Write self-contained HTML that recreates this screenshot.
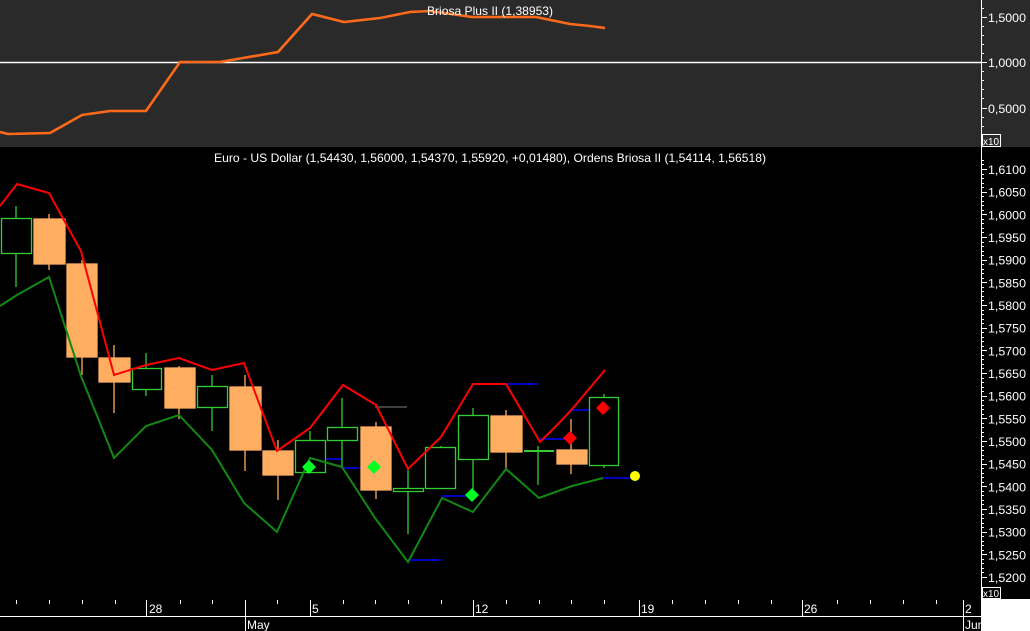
<!DOCTYPE html>
<html><head><meta charset="utf-8"><style>
html,body{margin:0;padding:0;background:#000;width:1030px;height:631px;overflow:hidden}
svg{display:block}
text{font-family:"Liberation Sans",sans-serif;font-size:12px;fill:#fff}
</style></head><body>
<svg width="1030" height="631" viewBox="0 0 1030 631" xmlns="http://www.w3.org/2000/svg">
<rect x="0" y="0" width="1030" height="147" fill="#2a2a2a"/>
<rect x="0" y="147" width="1030" height="484" fill="#000"/>
<!-- top panel -->
<line x1="0" y1="62.5" x2="981" y2="62.5" stroke="#fff" stroke-width="1.5"/>
<polyline fill="none" stroke="#ff6a1a" stroke-width="2.6" points="0,132 8,134 50,133 82,115 110,111 146,111 180,62 220,62 278,52 312,14 344,22 380,18 410,12 430,11 472,17 536,17 570,24 590,26 605,28"/>
<text x="427" y="15" textLength="126" lengthAdjust="spacingAndGlyphs">Briosa Plus II (1,38953)</text>
<line x1="981.5" y1="0" x2="981.5" y2="631" stroke="#fff"/>
<g stroke="#fff">
<line x1="981" y1="17.5" x2="987" y2="17.5"/><line x1="981" y1="62.5" x2="987" y2="62.5"/><line x1="981" y1="108.5" x2="987" y2="108.5"/>
<line x1="981" y1="8.5" x2="984" y2="8.5"/><line x1="981" y1="26.5" x2="984" y2="26.5"/><line x1="981" y1="35.5" x2="984" y2="35.5"/><line x1="981" y1="44.5" x2="984" y2="44.5"/><line x1="981" y1="53.5" x2="984" y2="53.5"/><line x1="981" y1="71.5" x2="984" y2="71.5"/><line x1="981" y1="80.5" x2="984" y2="80.5"/><line x1="981" y1="89.5" x2="984" y2="89.5"/><line x1="981" y1="98.5" x2="984" y2="98.5"/><line x1="981" y1="117.5" x2="984" y2="117.5"/><line x1="981" y1="126.5" x2="984" y2="126.5"/>
</g>
<text x="988" y="22" textLength="38" lengthAdjust="spacingAndGlyphs">1,5000</text>
<text x="988" y="67" textLength="38" lengthAdjust="spacingAndGlyphs">1,0000</text>
<text x="988" y="113" textLength="38" lengthAdjust="spacingAndGlyphs">0,5000</text>
<rect x="982.5" y="134.5" width="18" height="12" fill="none" stroke="#fff"/>
<text x="983" y="145" style="font-size:10px" textLength="16" lengthAdjust="spacingAndGlyphs">x10</text>
<!-- main title -->
<text x="214" y="162" textLength="552" lengthAdjust="spacingAndGlyphs">Euro - US Dollar (1,54430, 1,56000, 1,54370, 1,55920, +0,01480), Ordens Briosa II (1,54114, 1,56518)</text>
<!-- main axis ticks -->
<g stroke="#fff" id="ticks"></g>
<g id="labels"></g>
<!-- blue lines -->
<g stroke="#0000ff" stroke-width="1.5">
<line x1="310" y1="459" x2="342" y2="459"/><line x1="342" y1="468" x2="373" y2="468"/>
<line x1="375" y1="407" x2="407" y2="407" stroke="#555"/>
<line x1="408" y1="560" x2="441" y2="560"/><line x1="442" y1="496" x2="467" y2="496"/>
<line x1="473" y1="384" x2="538" y2="384"/><line x1="540" y1="439" x2="568" y2="439"/>
<line x1="572" y1="410" x2="600" y2="410"/><line x1="603" y1="478" x2="632" y2="478"/>
</g>
<!-- candles -->
<g stroke="#33cc33" stroke-width="1.3" fill="none">
<line x1="16" y1="206" x2="16" y2="287"/><rect x="1.5" y="218.5" width="30" height="35" fill="#000"/>
<line x1="146" y1="353" x2="146" y2="396"/><rect x="132.5" y="368.5" width="29" height="21" fill="#000"/>
<line x1="212" y1="375" x2="212" y2="431"/><rect x="197.5" y="386.5" width="30" height="21" fill="#000"/>
<line x1="310" y1="431" x2="310" y2="472"/><rect x="295.5" y="440.5" width="30" height="32" fill="#000"/>
<line x1="342" y1="398" x2="342" y2="468"/><rect x="327.5" y="427.5" width="30" height="13" fill="#000"/>
<line x1="408" y1="468" x2="408" y2="534"/><rect x="393.5" y="488.5" width="30" height="3" fill="#000"/>
<line x1="441" y1="446" x2="441" y2="488"/><rect x="425.5" y="447.5" width="30" height="41" fill="#000"/>
<line x1="473" y1="408" x2="473" y2="499"/><rect x="458.5" y="415.5" width="30" height="44" fill="#000"/>
<line x1="538" y1="446" x2="538" y2="485"/><line x1="524" y1="451" x2="554" y2="451" stroke-width="2"/>
<line x1="604" y1="394" x2="604" y2="468"/><rect x="589.5" y="397.5" width="29" height="68" fill="#000"/>
</g>
<g stroke="#ffad60" stroke-width="1.3" fill="#ffad60">
<line x1="49" y1="214" x2="49" y2="270"/><rect x="34" y="219" width="31" height="45"/>
<line x1="82" y1="260" x2="82" y2="375"/><rect x="67" y="264" width="30" height="93"/>
<line x1="114" y1="345" x2="114" y2="413"/><rect x="99" y="358" width="31" height="24"/>
<line x1="179" y1="366" x2="179" y2="419"/><rect x="165" y="368" width="30" height="40"/>
<line x1="245" y1="375" x2="245" y2="471"/><rect x="230" y="387" width="31" height="63"/>
<line x1="278" y1="440" x2="278" y2="500"/><rect x="263" y="451" width="30" height="24"/>
<line x1="376" y1="422" x2="376" y2="499"/><rect x="361" y="427" width="30" height="63"/>
<line x1="506" y1="410" x2="506" y2="470"/><rect x="491" y="416" width="31" height="36"/>
<line x1="571" y1="419" x2="571" y2="474"/><rect x="557" y="450" width="30" height="14"/>
</g>
<!-- red / green lines -->
<polyline fill="none" stroke="#ff0000" stroke-width="2" points="0,206 17,184 49,193 81,251 114,375 146,365 179,358 212,370 244,363 277,451 310,428 343,385 376,405 408,469 441,437 473,384 506,384 540,442 560,422 573,408 605,370"/>
<polyline fill="none" stroke="#118811" stroke-width="2" points="0,306 17,295 49,277 81,376 114,458 146,426 179,415 212,450 244,503 277,532 310,458 342,467 375,518 408,562 442,498 473,512 506,469 539,498 572,486 603,478"/>
<!-- markers -->
<g fill="#00ff22"><polygon points="309,460 316,467 309,474 302,467"/><polygon points="374,460 381,467 374,474 367,467"/><polygon points="472,488 479,495 472,502 465,495"/></g>
<g fill="#ff0000"><polygon points="570,431 577,438 570,445 563,438"/><polygon points="603,401 610,408 603,415 596,408"/></g>
<ellipse cx="635" cy="476" rx="5" ry="5" fill="#ffff00"/>
<!-- bottom axis -->
<line x1="0" y1="616.5" x2="981" y2="616.5" stroke="#fff"/>
<g stroke="#fff">
<line x1="16.5" y1="600" x2="16.5" y2="604"/><line x1="49.5" y1="600" x2="49.5" y2="604"/><line x1="82.5" y1="600" x2="82.5" y2="604"/><line x1="115.5" y1="600" x2="115.5" y2="604"/>
<line x1="180.5" y1="600" x2="180.5" y2="604"/><line x1="212.5" y1="600" x2="212.5" y2="604"/><line x1="277.5" y1="600" x2="277.5" y2="604"/>
<line x1="343.5" y1="600" x2="343.5" y2="604"/><line x1="375.5" y1="600" x2="375.5" y2="604"/><line x1="408.5" y1="600" x2="408.5" y2="604"/><line x1="441.5" y1="600" x2="441.5" y2="604"/>
<line x1="506.5" y1="600" x2="506.5" y2="604"/><line x1="539.5" y1="600" x2="539.5" y2="604"/><line x1="571.5" y1="600" x2="571.5" y2="604"/><line x1="604.5" y1="600" x2="604.5" y2="604"/>
<line x1="672.5" y1="600" x2="672.5" y2="604"/><line x1="705.5" y1="600" x2="705.5" y2="604"/><line x1="738.5" y1="600" x2="738.5" y2="604"/><line x1="771.5" y1="600" x2="771.5" y2="604"/>
<line x1="837.5" y1="600" x2="837.5" y2="604"/><line x1="870.5" y1="600" x2="870.5" y2="604"/><line x1="903.5" y1="600" x2="903.5" y2="604"/><line x1="936.5" y1="600" x2="936.5" y2="604"/>
<line x1="146.5" y1="600" x2="146.5" y2="616"/><line x1="310.5" y1="600" x2="310.5" y2="616"/><line x1="473.5" y1="600" x2="473.5" y2="616"/><line x1="639.5" y1="600" x2="639.5" y2="616"/><line x1="802.5" y1="600" x2="802.5" y2="616"/><line x1="963.5" y1="600" x2="963.5" y2="631"/>
<line x1="245.5" y1="600" x2="245.5" y2="631"/>
</g>
<text x="149" y="613">28</text><text x="312" y="613">5</text><text x="475" y="613">12</text><text x="641" y="613">19</text><text x="804" y="613">26</text><text x="965" y="613">2</text>
<text x="247" y="629">May</text><text x="965" y="629">Jun</text>
<rect x="981" y="599" width="49" height="32" fill="#fff"/>
<rect x="982.5" y="587.5" width="18" height="11" fill="#000" stroke="#fff"/>
<text x="983" y="597" style="font-size:10px" textLength="16" lengthAdjust="spacingAndGlyphs">x10</text>
</svg>
<script>
(function(){
var ns="http://www.w3.org/2000/svg",t=document.getElementById("ticks"),l=document.getElementById("labels");
for(var i=0;i<=92;i++){var y=Math.round(169+(i-2)*22.667/5)+0.5; if(y<150||y>597)continue;
var major=(i%5==2);var ln=document.createElementNS(ns,"line");ln.setAttribute("x1",981);ln.setAttribute("x2",major?987:984);ln.setAttribute("y1",y);ln.setAttribute("y2",y);t.appendChild(ln);}
for(var k=0;k<=18;k++){var p=(1.61-k*0.005).toFixed(4).replace(".",",");var y=169+k*22.667;
var tx=document.createElementNS(ns,"text");tx.setAttribute("x",988);tx.setAttribute("y",y+5);tx.setAttribute("textLength",38);tx.setAttribute("lengthAdjust","spacingAndGlyphs");tx.textContent=p;l.appendChild(tx);}
})();
</script>
</body></html>
